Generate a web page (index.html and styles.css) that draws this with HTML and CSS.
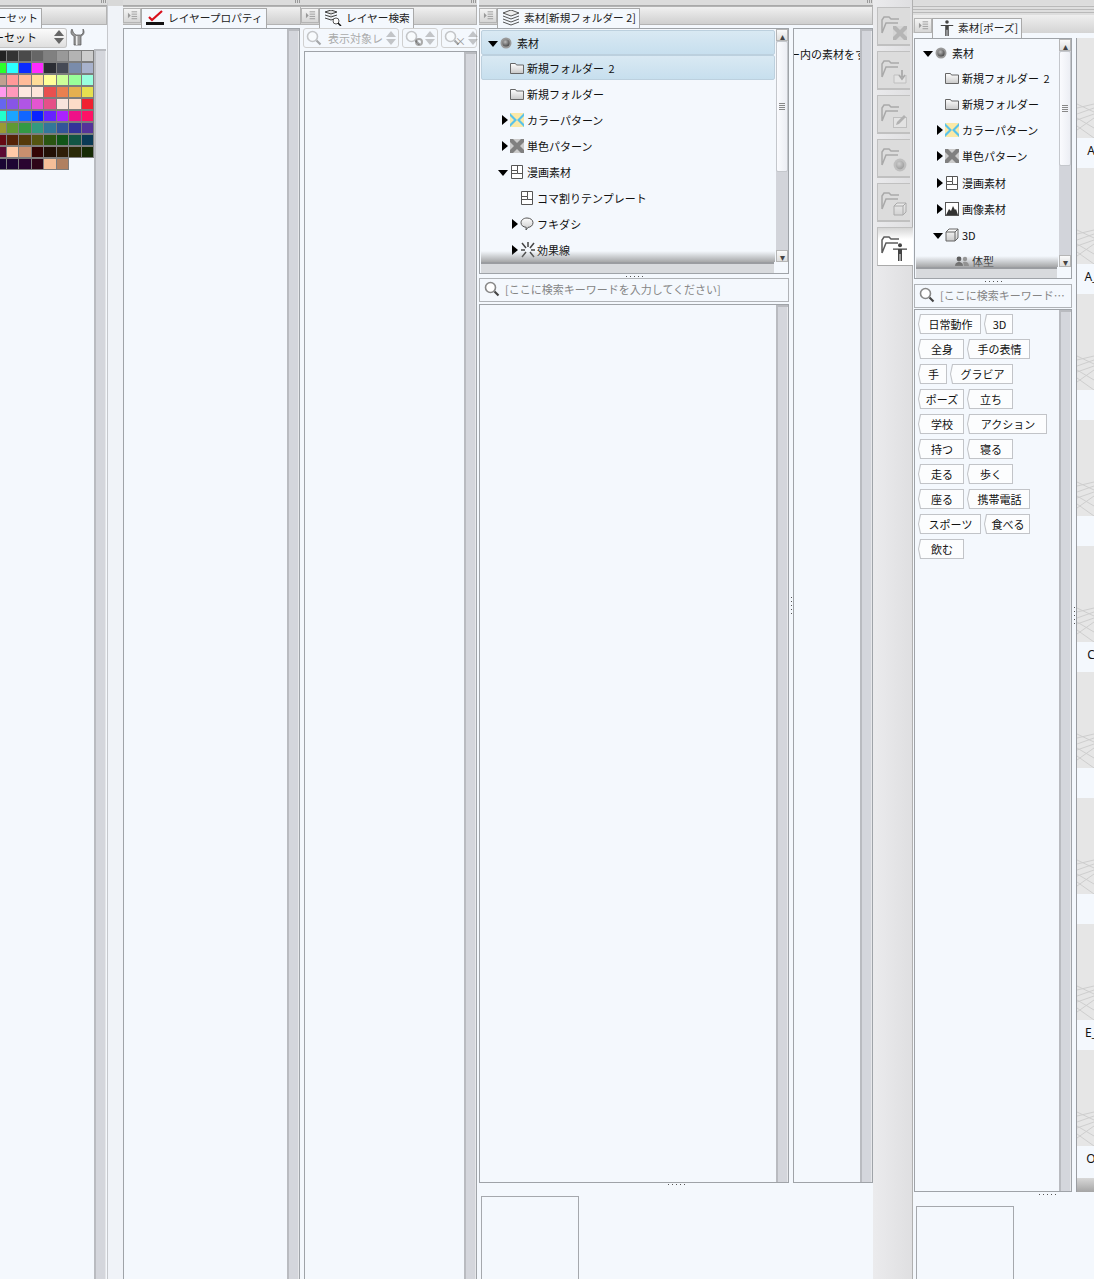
FILE: index.html
```html
<!DOCTYPE html>
<html lang="ja">
<head>
<meta charset="utf-8">
<title>素材パレット</title>
<link rel="stylesheet" href="styles.css">
</head>
<body>
<svg class="defs" aria-hidden="true">
  <defs>
    <linearGradient id="fg" x1="0" y1="0" x2="0" y2="1"><stop offset="0" stop-color="#fff"/><stop offset="1" stop-color="#c8c8c8"/></linearGradient>
    <radialGradient id="sg" cx=".4" cy=".35" r=".7"><stop offset="0" stop-color="#bbb"/><stop offset="1" stop-color="#444"/></radialGradient>
    <symbol id="i-menu" viewBox="0 0 12 12"><path d="M1 3l3 3-3 3z" fill="#999"/><path d="M5 2h6M5 4.500h6M5 7h6M5 9.500h6" stroke="#999" fill="none"/></symbol>
    <symbol id="i-folder" viewBox="0 0 14 12"><path d="M.5 1.500h5l1 1.500h7v8.500H.5z" fill="url(#fg)" stroke="#666"/></symbol>
    <symbol id="i-cpat" viewBox="0 0 14 14"><rect width="14" height="14" fill="#fbe9a6"/><path d="M0 0l7 7 7-7v3L10 7l4 4v3L7 7l-7 7v-3L4 7 0 3z" fill="#58c2ea"/></symbol>
    <symbol id="i-mono" viewBox="0 0 14 14"><rect width="14" height="14" fill="#ccc"/><path d="M0 0h3l4 4 4-4h3v3L10 7l4 4v3h-3L7 10l-4 4H0v-3L4 7 0 3z" fill="#808080"/></symbol>
    <symbol id="i-frame" viewBox="0 0 12 14"><path d="M.5.500h11v13H.5zM.5 5.500h6v3h5M6.500.500v5M.5 8.500h6" fill="#fff" stroke="#555"/></symbol>
    <symbol id="i-balloon" viewBox="0 0 14 14"><path d="M7 1c3.500 0 6 2 6 4.700S10.500 10.400 8 10.400L6 13l.2-2.700C3 10 1 8.300 1 5.700S3.500 1 7 1z" fill="url(#fg)" stroke="#555"/></symbol>
    <symbol id="i-lines" viewBox="0 0 16 16"><path d="M2 1l4 5M8 0v5M14 1l-4 5M1 8h4M15 8h-4M2 15l4-5M14 15l-4-5" stroke="#444" stroke-width="1.500" fill="none"/></symbol>
    <symbol id="i-sphere" viewBox="0 0 12 12"><circle cx="6" cy="6" r="5.500" fill="#999"/><circle cx="6" cy="6" r="3.600" fill="url(#sg)"/></symbol>
    <symbol id="i-image" viewBox="0 0 14 14"><rect x=".5" y=".5" width="13" height="13" fill="#fff" stroke="#555"/><path d="M1 13l3-6 2 2 2-5 2 4 1-1 2 6z" fill="#333"/></symbol>
    <symbol id="i-cube" viewBox="0 0 14 14"><path d="M1 4l3-3h9v9l-3 3H1zM1 4h9v9M10 4l3-3" fill="url(#fg)" stroke="#666"/></symbol>
    <symbol id="i-people" viewBox="0 0 14 10"><circle cx="4" cy="3" r="2.400" fill="#555"/><path d="M0 10c0-3 2-4 4-4s4 1 4 4z" fill="#555"/><circle cx="10" cy="3" r="2.200" fill="#999"/><path d="M8 6c3-1 6 0 6 4H9z" fill="#999"/></symbol>
    <symbol id="i-search" viewBox="0 0 16 16"><circle cx="6.500" cy="6.500" r="5" fill="#fff" stroke="#888" stroke-width="1.600"/><path d="M10.500 10.500l4 4" stroke="#444" stroke-width="2.200"/></symbol>
    <symbol id="i-person" viewBox="0 0 14 18"><circle cx="7" cy="2.200" r="2" fill="#444"/><path d="M0 5.500h14v1.300H9V18H7.500v-7h-1v7H5V6.800H0z" fill="#444"/></symbol>
    <symbol id="i-wire" viewBox="0 0 18 38" preserveAspectRatio="none"><path d="M0 8l18-4M0 4l18 8M0 14l18-6M0 20l18-6M0 18l18 10M0 30l18-12M0 26l18 12" stroke="#cdcdcd" fill="none"/></symbol>
    <symbol id="i-fbase" viewBox="0 0 22 18"><path d="M1 17V4l2-3h5l2 2h8M1 17L5 7h12" fill="none" stroke="#a9a9a9" stroke-width="1.500"/></symbol>
  </defs>
</svg>

<div class="app">
  <section class="col col-color">
    <div class="topbar"><span class="grip"></span></div>
    <div class="tabbar">
      <div class="tab tab-cut">ーセット</div>
    </div>
    <div class="setrow">
      <div class="select"><span class="select-text">ーセット</span><span class="updown"></span></div>
      <svg class="wrench" viewBox="0 0 16 18"><path d="M2 1c-2 3-1 6 2 7v9h7V8c3-1 4-4 2-7v4l-2 2H6L3.500 5z" fill="#999" stroke="#555" stroke-width=".7"/><path d="M6 8h1.500v9H6z" fill="#eee"/></svg>
    </div>
    <div class="fill-row">
      <div class="swatches">
        <i class="s" style="background:#222"></i><i class="s" style="background:#333"></i><i class="s" style="background:#4a4a4a"></i><i class="s" style="background:#666"></i><i class="s" style="background:#808080"></i><i class="s" style="background:#999"></i><i class="s" style="background:#b3b3b3"></i><i class="s" style="background:#ccc"></i>
        <i class="s" style="background:#2bff2b"></i><i class="s" style="background:#2bffff"></i><i class="s" style="background:#0a2bff"></i><i class="s" style="background:#ff2bff"></i><i class="s" style="background:#2b2d33"></i><i class="s" style="background:#464a55"></i><i class="s" style="background:#7a8cab"></i><i class="s" style="background:#a8b2cc"></i>
        <i class="s" style="background:#c0a090"></i><i class="s" style="background:#ff9999"></i><i class="s" style="background:#ffbb99"></i><i class="s" style="background:#ffdd99"></i><i class="s" style="background:#ffff99"></i><i class="s" style="background:#ccff99"></i><i class="s" style="background:#99ff99"></i><i class="s" style="background:#99ffdd"></i>
        <i class="s" style="background:#ff99ee"></i><i class="s" style="background:#ff99bb"></i><i class="s" style="background:#fde8e0"></i><i class="s" style="background:#fde6da"></i><i class="s" style="background:#e85050"></i><i class="s" style="background:#e88050"></i><i class="s" style="background:#e5b050"></i><i class="s" style="background:#e5e050"></i>
        <i class="s" style="background:#6666ee"></i><i class="s" style="background:#8855e5"></i><i class="s" style="background:#b055e5"></i><i class="s" style="background:#e555d0"></i><i class="s" style="background:#e55088"></i><i class="s" style="background:#f8e4dc"></i><i class="s" style="background:#fddcc8"></i><i class="s" style="background:#f02030"></i>
        <i class="s" style="background:#22ffcc"></i><i class="s" style="background:#1aa5ff"></i><i class="s" style="background:#1166ff"></i><i class="s" style="background:#0a22ff"></i><i class="s" style="background:#6622ff"></i><i class="s" style="background:#aa22ff"></i><i class="s" style="background:#ee1188"></i><i class="s" style="background:#ff1166"></i>
        <i class="s" style="background:#9a9a33"></i><i class="s" style="background:#5f9933"></i><i class="s" style="background:#339944"></i><i class="s" style="background:#339980"></i><i class="s" style="background:#337799"></i><i class="s" style="background:#335599"></i><i class="s" style="background:#333399"></i><i class="s" style="background:#553399"></i>
        <i class="s" style="background:#660a14"></i><i class="s" style="background:#552208"></i><i class="s" style="background:#553a0a"></i><i class="s" style="background:#555511"></i><i class="s" style="background:#2a5511"></i><i class="s" style="background:#115518"></i><i class="s" style="background:#115544"></i><i class="s" style="background:#0a3a55"></i>
        <i class="s" style="background:#5a0a33"></i><i class="s" style="background:#ffcaa8"></i><i class="s" style="background:#c8906f"></i><i class="s" style="background:#330505"></i><i class="s" style="background:#221005"></i><i class="s" style="background:#2e1e08"></i><i class="s" style="background:#2a2a08"></i><i class="s" style="background:#162a05"></i>
        <i class="s" style="background:#1a0533"></i><i class="s" style="background:#1e0533"></i><i class="s" style="background:#2a0530"></i><i class="s" style="background:#2e0518"></i><i class="s" style="background:#f5bf98"></i><i class="s" style="background:#b08060"></i>
      </div>
      <div class="vs"></div>
    </div>
  </section>

  <div class="gap-a"></div>

  <section class="col col-prop">
    <div class="topbar"><span class="grip"></span></div>
    <div class="tabbar">
      <div class="tabmenu"><svg class="i12"><use href="#i-menu"/></svg></div>
      <div class="tab">
        <svg class="tabicon" viewBox="0 0 18 16"><rect x="0" y="12" width="18" height="3" fill="#111"/><path d="M3 7l3 3L16 1" fill="none" stroke="#d8101c" stroke-width="2.200"/></svg>
        レイヤープロパティ
      </div>
    </div>
    <div class="box box-grow"><div class="box-body"></div><div class="vs"></div></div>
  </section>

  <section class="col col-search">
    <div class="topbar"><span class="grip"></span></div>
    <div class="tabbar">
      <div class="tabmenu"><svg class="i12"><use href="#i-menu"/></svg></div>
      <div class="tab">
        <svg class="tabicon" viewBox="0 0 18 16"><path d="M1 2l6-2 6 2-6 2zM1 5l6 2 6-2M1 8l6 2 3-1" fill="#ddd" stroke="#444"/><circle cx="12" cy="11" r="3" fill="#fff" stroke="#555"/><path d="M14 13l3 3" stroke="#111" stroke-width="1.500"/></svg>
        レイヤー検索
      </div>
    </div>
    <div class="toolrow">
      <div class="tool tool-a">
        <svg class="i16 dim"><use href="#i-search"/></svg><span class="tooltext">表示対象レ</span><span class="updown dim-ud"></span>
      </div>
      <div class="tool tool-b">
        <svg class="i16 dim"><use href="#i-search"/></svg><span class="mini-c"></span><span class="updown dim-ud"></span>
      </div>
      <div class="tool tool-b">
        <svg class="i16 dim"><use href="#i-search"/></svg><span class="mini-x">×</span><span class="updown dim-ud"></span>
      </div>
    </div>
    <div class="box box-grow box-inset"><div class="box-body"></div><div class="vs"></div></div>
  </section>

  <section class="col col-mat">
    <div class="topbar"><span class="grip"></span></div>
    <div class="tabbar">
      <div class="tabmenu"><svg class="i12"><use href="#i-menu"/></svg></div>
      <div class="tab">
        <svg class="tabicon" viewBox="0 0 18 16"><path d="M9 0l8 3-8 3-8-3z" fill="#eee" stroke="#555"/><path d="M1 6l8 3 8-3M1 9l8 3 8-3M1 12l8 3 8-3" fill="none" stroke="#555"/></svg>
        素材[新規フォルダー 2]
      </div>
    </div>
    <div class="mat-main">
      <div class="mat-left">
        <div class="treebox treebox-a">
          <div class="treewrap">
            <div class="tree">
              <div class="row sel lv0 row-tight"><i class="arr down"></i><svg class="ic"><use href="#i-sphere" x="0" y="1" width="12" height="12"/></svg><span>素材</span></div>
              <div class="row sel lv1"><i class="arr"></i><svg class="ic"><use href="#i-folder"/></svg><span>新規フォルダー 2</span></div>
              <div class="row lv1"><i class="arr"></i><svg class="ic"><use href="#i-folder"/></svg><span>新規フォルダー</span></div>
              <div class="row lv1"><i class="arr right"></i><svg class="ic"><use href="#i-cpat"/></svg><span>カラーパターン</span></div>
              <div class="row lv1"><i class="arr right"></i><svg class="ic"><use href="#i-mono"/></svg><span>単色パターン</span></div>
              <div class="row lv1"><i class="arr down"></i><svg class="ic"><use href="#i-frame"/></svg><span>漫画素材</span></div>
              <div class="row lv2"><i class="arr"></i><svg class="ic"><use href="#i-frame"/></svg><span>コマ割りテンプレート</span></div>
              <div class="row lv2"><i class="arr right"></i><svg class="ic"><use href="#i-balloon"/></svg><span>フキダシ</span></div>
              <div class="row lv2"><i class="arr right"></i><svg class="ic ic-wide"><use href="#i-lines"/></svg><span>効果線</span></div>
            </div>
            <div class="fade"></div>
          </div>
          <div class="vs vs-tree">
            <div class="vbtn">▴</div>
            <div class="thumb thumb-a"><span class="thumbgrip"></span></div>
            <div class="vtrack"></div>
            <div class="vbtn">▾</div>
          </div>
        </div>
        <div class="hrow"><div class="hs"></div><div class="corner"></div></div>
        <div class="dots"></div>
        <div class="searchbox"><svg class="i16"><use href="#i-search"/></svg><span class="ph">[ここに検索キーワードを入力してください]</span></div>
        <div class="box box-list"><div class="box-body"></div><div class="vs"></div></div>
      </div>
      <div class="vdots"><i></i><i></i><i></i><i></i><i></i></div>
      <div class="box box-pane">
        <div class="box-body pane-text"><span>ー内の素材をす</span></div>
        <div class="vs"></div>
      </div>
    </div>
    <div class="dots dots-bottom"></div>
    <div class="preview"></div>
  </section>

  <nav class="strip">
    <div class="fbtn"><svg class="fbase"><use href="#i-fbase"/></svg><svg class="fover"><use href="#i-mono"/></svg></div>
    <div class="fbtn"><svg class="fbase"><use href="#i-fbase"/></svg><svg class="fover" viewBox="0 0 14 14"><path d="M1 5h5M1 5v8h12V5" fill="#eee" stroke="#999"/><path d="M9 0v7M6 5l3 4 3-4" fill="none" stroke="#666" stroke-width="1.800"/></svg></div>
    <div class="fbtn"><svg class="fbase"><use href="#i-fbase"/></svg><svg class="fover" viewBox="0 0 14 14"><rect x=".5" y="3.500" width="13" height="10" fill="#eee" stroke="#999"/><path d="M3 11l1-3 7-7 2 2-7 7z" fill="#777"/></svg></div>
    <div class="fbtn"><svg class="fbase"><use href="#i-fbase"/></svg><svg class="fover"><use href="#i-sphere"/></svg></div>
    <div class="fbtn"><svg class="fbase"><use href="#i-fbase"/></svg><svg class="fover"><use href="#i-cube"/></svg></div>
    <div class="fbtn fbtn-on"><svg class="fbase fbase-on"><use href="#i-fbase"/></svg><svg class="fover"><use href="#i-person"/></svg></div>
  </nav>

  <section class="col col-pose">
    <div class="stripes"></div>
    <div class="tabbar tabbar-pose">
      <div class="tabmenu"><svg class="i12"><use href="#i-menu"/></svg></div>
      <div class="tab">
        <svg class="tabicon"><use href="#i-person"/></svg>
        素材[ポーズ]
      </div>
    </div>
    <div class="pose-main">
      <div class="pose-left">
        <div class="treebox treebox-b">
          <div class="treewrap">
            <div class="tree">
              <div class="row lv0 row-tight"><i class="arr down"></i><svg class="ic"><use href="#i-sphere" x="0" y="1" width="12" height="12"/></svg><span>素材</span></div>
              <div class="row lv1"><i class="arr"></i><svg class="ic"><use href="#i-folder"/></svg><span>新規フォルダー 2</span></div>
              <div class="row lv1"><i class="arr"></i><svg class="ic"><use href="#i-folder"/></svg><span>新規フォルダー</span></div>
              <div class="row lv1"><i class="arr right"></i><svg class="ic"><use href="#i-cpat"/></svg><span>カラーパターン</span></div>
              <div class="row lv1 row-loose"><i class="arr right"></i><svg class="ic"><use href="#i-mono"/></svg><span>単色パターン</span></div>
              <div class="row lv1"><i class="arr right"></i><svg class="ic"><use href="#i-frame"/></svg><span>漫画素材</span></div>
              <div class="row lv1"><i class="arr right"></i><svg class="ic"><use href="#i-image"/></svg><span>画像素材</span></div>
              <div class="row lv1"><i class="arr down"></i><svg class="ic"><use href="#i-cube"/></svg><span>3D</span></div>
              <div class="row lv2"><i class="arr"></i><svg class="ic"><use href="#i-people"/></svg><span>体型</span></div>
            </div>
            <div class="fade"></div>
          </div>
          <div class="vs vs-tree">
            <div class="vbtn">▴</div>
            <div class="thumb thumb-b"><span class="thumbgrip"></span></div>
            <div class="vtrack"></div>
            <div class="vbtn">▾</div>
          </div>
        </div>
        <div class="hrow"><div class="hs"></div><div class="corner"></div></div>
        <div class="dots dots-pose"></div>
        <div class="searchbox"><svg class="i16"><use href="#i-search"/></svg><span class="ph">[ここに検索キーワード…</span></div>
        <div class="box box-tags">
          <div class="box-body tags">
            <div class="tagrow"><span class="tag w3">日常動作</span><span class="tag w1">3D</span></div>
            <div class="tagrow"><span class="tag w2">全身</span><span class="tag w3">手の表情</span></div>
            <div class="tagrow"><span class="tag w1">手</span><span class="tag w3">グラビア</span></div>
            <div class="tagrow"><span class="tag w2">ポーズ</span><span class="tag w2">立ち</span></div>
            <div class="tagrow"><span class="tag w2">学校</span><span class="tag w4">アクション</span></div>
            <div class="tagrow"><span class="tag w2">持つ</span><span class="tag w2">寝る</span></div>
            <div class="tagrow"><span class="tag w2">走る</span><span class="tag w2">歩く</span></div>
            <div class="tagrow"><span class="tag w2">座る</span><span class="tag w3">携帯電話</span></div>
            <div class="tagrow"><span class="tag w3">スポーツ</span><span class="tag w2">食べる</span></div>
            <div class="tagrow"><span class="tag w2">飲む</span></div>
          </div>
          <div class="vs"></div>
        </div>
      </div>
      <div class="vdots"><i></i><i></i><i></i><i></i><i></i></div>
      <div class="thumbs">
        <div class="cell cell-first"><div class="pic"><svg class="wire"><use href="#i-wire"/></svg></div><div class="lab">A</div></div>
        <div class="cell"><div class="pic"><svg class="wire"><use href="#i-wire"/></svg></div><div class="lab">A_</div></div>
        <div class="cell"><div class="pic"><svg class="wire"><use href="#i-wire"/></svg></div><div class="lab"></div></div>
        <div class="cell"><div class="pic"><svg class="wire"><use href="#i-wire"/></svg></div><div class="lab"></div></div>
        <div class="cell"><div class="pic"><svg class="wire"><use href="#i-wire"/></svg></div><div class="lab">C</div></div>
        <div class="cell"><div class="pic"><svg class="wire"><use href="#i-wire"/></svg></div><div class="lab"></div></div>
        <div class="cell"><div class="pic"><svg class="wire"><use href="#i-wire"/></svg></div><div class="lab"></div></div>
        <div class="cell"><div class="pic"><svg class="wire"><use href="#i-wire"/></svg></div><div class="lab">E_</div></div>
        <div class="cell"><div class="pic"><svg class="wire"><use href="#i-wire"/></svg></div><div class="lab">O</div></div>
        <div class="fade fade-thumbs"></div>
      </div>
    </div>
    <div class="dots dots-pose2"></div>
    <div class="preview preview-pose"></div>
  </section>
</div>
</body>
</html>
```

FILE: styles.css
```css
* { box-sizing: border-box; }
html, body { margin: 0; padding: 0; }
body {
  width: 1094px; height: 1279px; overflow: hidden;
  background: #f4f8fd; color: #111;
  font: 11px/14px "Noto Sans CJK JP", "Noto Sans", sans-serif;
  word-spacing: 2px;
}
.defs { width: 0; height: 0; position: absolute; }
.app { display: flex; width: 1094px; height: 1279px; }
.col { display: flex; flex-direction: column; height: 100%; min-width: 0; }
.col-color { width: 107px; }
.gap-a { width: 16px; background: #f0f3f8; border-left: 1px solid #c6c8cc; border-top: 6px solid #d8d8d8; }
.col-prop { width: 178px; }
.col-search { width: 176px; }
.col-mat { width: 394px; margin-left: 2px; }
.col-pose { width: 181px; }

.topbar { height: 6px; flex: none; background: #dcdcdc; border-bottom: 1px solid #a9a9a9; display: flex; justify-content: flex-end; }
.grip { width: 5px; height: 3px; margin: 0 1px; background: repeating-linear-gradient(90deg, #999 0 1px, transparent 1px 2px); }
.tabbar {
  height: 22px; flex: none; display: flex; align-items: flex-start; padding-top: 2px;
  background: #f4f8fd;
  position: relative;
}
.tabbar::before {
  content: ""; position: absolute; left: 0; right: 0; top: 0; height: 17px;
  background: linear-gradient(#f0f0f0, #cfcfcf); border: 1px solid #b3b3b3; border-width: 1px 1px 1px 0;
}
.tabmenu {
  position: relative; width: 18px; height: 15px; flex: none;
  display: flex; align-items: center; justify-content: center;
  background: linear-gradient(#f4f4f4, #d6d6d6); border: 1px solid #b5b5b5;
}
.i12 { width: 11px; height: 11px; }
.tab {
  position: relative; height: 20px; flex: none; display: flex; align-items: center; gap: 4px;
  padding: 0 3px 2px 4px; font-size: 10.7px; white-space: nowrap; word-spacing: 0;
  background: #f4f8fd; border: 1px solid #a9a9a9; border-bottom: 0; color: #222;
}
.tabicon { width: 18px; height: 16px; flex: none; }
.tab-cut { margin-left: -8px; padding-left: 0; padding-right: 3px; width: 50px; justify-content: flex-end; font-size: 10.5px; }

.setrow { height: 21px; flex: none; display: flex; align-items: flex-start; gap: 3px; padding-right: 21px; }
.select {
  flex: 1; min-width: 0; height: 20px; display: flex; align-items: center; justify-content: space-between; padding: 0 2px 2px 0;
  background: linear-gradient(#fbfbfb, #dfdfdf); border: 1px solid #c4c4c4; border-left: 0; border-radius: 0 3px 3px 0;
}
.select-text { margin-left: -7px; }
.updown { width: 10px; height: 14px; flex: none; display: flex; flex-direction: column; justify-content: space-between; }
.updown::before { content: ""; border: 5px solid transparent; border-top: 0; border-bottom: 6px solid #666; }
.updown::after { content: ""; border: 5px solid transparent; border-bottom: 0; border-top: 6px solid #666; }
.dim-ud { opacity: .35; }
.wrench { width: 16px; height: 18px; flex: none; }

.fill-row { flex: 1; display: flex; min-height: 0; padding-right: 1px; }
.swatches {
  width: 94px; align-self: flex-start; flex: none;
  display: grid; grid-template-columns: 6.500px repeat(7, 1fr); grid-auto-rows: 12px; padding-top: 1px;
}
.s { display: block; border: 1px solid #7d7d7d; border-left-width: 0; }
.vs {
  width: 12px; flex: none; align-self: stretch;
  background: linear-gradient(90deg, #b9bbc0 0 2px, #d4d6dc 2px 11px, #e6e7ea 11px);
  border-top: 2px solid #b9bbc0;
}

.box { display: flex; border: 1px solid #9fa3a8; background: #f4f8fd; min-height: 0; }
.box-body { flex: 1; min-width: 0; }
.box-grow { flex: 1; border-bottom: 0; }
.col-prop .box-grow { margin-right: 1px; }
.box-inset { margin-left: 3px; }

.toolrow { height: 23px; flex: none; display: flex; gap: 3px; padding: 0 0 0 2px; align-items: flex-start; }
.tool {
  height: 20px; display: flex; align-items: center; border: 1px solid #d0d0d0; border-radius: 3px; padding: 0 2px;
  background: #f4f8fd; color: #aaa; flex: none;
}
.tool-a { width: 96px; }
.tool-b { width: 36px; position: relative; }
.tooltext { flex: 1; padding-left: 6px; white-space: nowrap; overflow: hidden; }
.i16 { width: 16px; height: 16px; flex: none; }
.dim { opacity: .45; }
.mini-c { width: 8px; height: 8px; border: 2px solid #aaa; border-radius: 50%; margin-left: -6px; margin-top: 8px; margin-right: 2px; flex: none; }
.mini-x { margin-left: -5px; margin-top: 6px; margin-right: 2px; font-size: 11px; color: #999; flex: none; }

.mat-main { height: 1155px; flex: none; display: flex; }
.mat-left { width: 310px; flex: none; display: flex; flex-direction: column; }
.treebox { display: flex; flex: none; border: 1px solid #9fa3a8; border-bottom: 0; padding-left: 1px; background: #f4f8fd; }
.treebox-a { height: 234px; }
.treebox-b { height: 229px; }
.treewrap { flex: 1; min-width: 0; position: relative; overflow: hidden; padding-top: 1px; margin-right: 1px; }
.tree { display: flex; flex-direction: column; gap: 1px; }
.row { height: 25px; flex: none; display: flex; align-items: center; white-space: nowrap; border: 1px solid transparent; }
.row.sel { background: linear-gradient(#d9e9f3, #c7dfee); border-color: #bcd0de; border-radius: 2px; }
.row-tight { margin-bottom: -1px; }
.row-loose { margin-bottom: 1px; }
.lv0 { padding-left: 6px; }
.lv1 { padding-left: 16px; }
.lv2 { padding-left: 26px; }
.arr { width: 12px; height: 10px; flex: none; position: relative; display: block; }
.arr.down::before { content: ""; position: absolute; left: 0; top: 3px; border: 5px solid transparent; border-top: 6px solid #000; border-bottom: 0; }
.arr.right::before { content: ""; position: absolute; left: 4px; top: 0; border: 5px solid transparent; border-left: 6px solid #000; border-right: 0; }
.ic { width: 14px; height: 14px; flex: none; margin-right: 3px; }
.ic-wide { width: 16px; height: 16px; margin: 0 1px 0 0; }
.fade { position: absolute; left: 0; right: 0; bottom: 0; height: 11px; background: linear-gradient(rgba(160,160,160,0), rgba(140,140,140,.75)); pointer-events: none; }
.vs-tree { display: flex; flex-direction: column; border-top: 0; background: #d2d4da; }
.vbtn { height: 12px; flex: none; text-align: center; line-height: 11px; font-size: 10px; color: #444; background: linear-gradient(#fafafa, #dedede); border: 1px solid #b5b5b5; }
.thumb { flex: none; display: flex; align-items: center; justify-content: center; background: linear-gradient(90deg, #fafbfe, #eceef4); border: 1px solid #c4c7cc; border-radius: 2px; }
.thumb-a { height: 131px; }
.thumb-b { height: 115px; }
.thumbgrip { width: 6px; height: 7px; background: repeating-linear-gradient(#888 0 1px, transparent 1px 2px); }
.vtrack { flex: 1; }
.hrow { height: 12px; flex: none; display: flex; gap: 2px; border: 1px solid #9fa3a8; border-top: 0; padding-left: 1px; background: #f4f8fd; }
.hs { flex: 1; background: #d8dadd; border-top: 2px solid #9a9ca0; }
.corner { width: 12px; flex: none; background: #f4f8fd; }
.dots { height: 4px; flex: none; display: flex; justify-content: center; padding-top: 2px; }
.dots::before { content: ""; width: 17px; height: 1px; background: repeating-linear-gradient(90deg, #555 0 1px, transparent 1px 4px); }
.searchbox {
  height: 24px; flex: none; display: flex; align-items: center; gap: 5px; padding: 0 0 2px 4px;
  background: #f4f8fd; border: 1px solid #b0b3b7; white-space: nowrap; overflow: hidden;
}
.ph { color: #858585; }
.box-list { flex: 1; margin-top: 2px; }
.vdots { width: 4px; flex: none; display: flex; flex-direction: column; gap: 3px; align-items: center; padding-top: 569px; }
.vdots i { width: 1px; height: 1px; background: #555; display: block; }
.box-pane { flex: 1; min-width: 0; }
.pane-text { padding: 18px 0 0 0; white-space: nowrap; overflow: hidden; }
.pane-text span { margin-left: -5px; display: block; }
.dots-bottom { height: 13px; padding: 1px 0 0 189px; justify-content: flex-start; }
.preview { width: 98px; flex: 1; margin-left: 2px; border: 1px solid #a5a8ad; border-bottom: 0; background: #f4f8fd; }
.preview-pose { margin-left: 3px; }

.strip {
  width: 40px; flex: none; display: flex; flex-direction: column; gap: 5px; padding: 7px 0 0 4px;
  background: linear-gradient(90deg, #ebebed, #dfdfe1); border-right: 1px solid #b0b0b0;
}
.fbtn { height: 39px; width: 33px; flex: none; position: relative; background: #dcdcdc; border: 1px solid #c0c0c0; border-width: 1px 0 2px 1px; }
.fbtn-on { width: 36px; background: linear-gradient(#d6d6d6, #fff 30%); border-bottom: 1px solid #aaa; }
.fbase { width: 22px; height: 18px; position: absolute; left: 3px; top: 8px; }
.fbase-on { filter: brightness(.55); }
.fover { width: 14px; height: 14px; position: absolute; left: 15px; top: 18px; opacity: .42; }
.fbtn-on .fover { opacity: 1; height: 18px; top: 15px; }

.stripes { height: 15px; flex: none; background: linear-gradient(#dcdcdc 0 5px, transparent 5px), repeating-linear-gradient(#b9b9b9 0 1px, #dedede 1px 3px); }
.tabbar-pose { height: 23px; padding: 3px 0 0 1px; }
.tabbar-pose .tab { padding-left: 7px; padding-right: 3px; gap: 4px; }
.tabbar-pose .tabicon { width: 14px; height: 16px; }
.tabbar-pose::before { border: 0; height: 18px; background: linear-gradient(#efefef, #d4d4d4); }
.pose-main { height: 1154px; flex: none; display: flex; padding-left: 1px; }
.pose-left { width: 158px; flex: none; display: flex; flex-direction: column; }
.dots-pose { height: 5px; }
.box-tags { flex: 1; margin-top: 1px; }
.tags { padding: 4px 0 0 3px; display: flex; flex-direction: column; gap: 5px; }
.tagrow { display: flex; gap: 3px; }
.tag {
  position: relative; z-index: 0; height: 20px; flex: none; display: flex; align-items: center; justify-content: center;
  background: #c2c4c8; padding-left: 2px;
  clip-path: polygon(2px 0, 100% 0, 100% 100%, 2px 100%, 0 50%);
}
.tag::before {
  content: ""; position: absolute; inset: 1px; z-index: -1; background: #fcfdfe;
  clip-path: polygon(2px 0, 100% 0, 100% 100%, 2px 100%, 0 50%);
}
.w1 { width: 29px; }
.w2 { width: 46px; }
.w3 { width: 63px; }
.w4 { width: 80px; }
.thumbs { flex: 1; min-width: 0; position: relative; overflow: hidden; border-left: 1px solid #9a9da2; background: #f4f8fd; }
.cell { height: 126px; display: flex; flex-direction: column; }
.cell-first { height: 130px; }
.pic { flex: 1; background: #e6e6e6; display: flex; align-items: flex-end; }
.wire { width: 100%; height: 38px; display: block; }
.lab { height: 30px; flex: none; width: 28px; text-align: center; font: 12px/26px "Noto Sans", sans-serif; color: #111; white-space: nowrap; }
.fade-thumbs { height: 14px; background: linear-gradient(#d8d8d8, #a5a5a5); }
.dots-pose2 { height: 14px; padding: 2px 0 0 126px; justify-content: flex-start; }
```
